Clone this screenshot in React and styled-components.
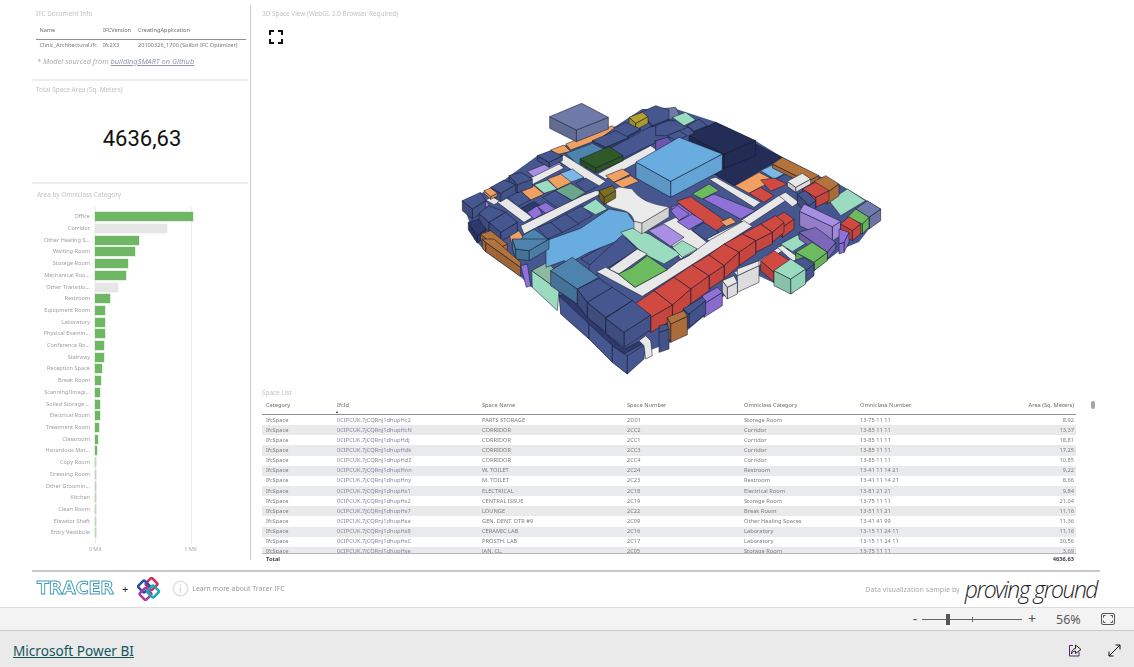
import React from 'react';
import styled, { createGlobalStyle } from 'styled-components';

const Global = createGlobalStyle`
  html, body { margin: 0; padding: 0; background: #fff; overflow: hidden; }
  body { font-family: "Noto Sans", "Open Sans", sans-serif; }
`;

const Page = styled.div`
  width: 1134px; height: 667px; display: flex; flex-direction: column; overflow: hidden;
`;
const Canvas = styled.div`
  height: 607px; box-sizing: border-box; padding: 5px 34px 0 32px; background: #fff;
  display: flex; flex-direction: column;
`;
const Main = styled.div`
  height: 555px; display: flex;
`;
const LeftCol = styled.div`
  width: 216px; display: flex; flex-direction: column;
`;
const Divider = styled.div`
  width: 1px; margin: 0 1px 0 2px; background: #cfcfcf; flex: none;
`;
const RightCol = styled.div`
  flex: 1; min-width: 0; display: flex; flex-direction: column; padding-left: 10px;
`;
const Panel = styled.section`
  height: ${p => p.$h}px; box-sizing: border-box; padding: ${p => p.$pad}; flex: none;
  border-bottom: ${p => (p.$last ? 'none' : '2px solid #eeeeee')};
  display: flex; flex-direction: column;
`;
const Title = styled.h3`
  margin: 0; font-weight: 400; font-size: 6.4px; line-height: 9px; color: #c2c2c2; white-space: nowrap;
  filter: blur(.25px);
`;
const ViewTitle = styled(Title)`
  margin-top: 4px;
`;
const InfoGrid = styled.div`
  display: grid; grid-template-columns: 63.5px 35px 1fr; margin: 8px 2px 0 0; filter: blur(.25px);
`;
const InfoHead = styled.div`
  font-size: 5.6px; line-height: 9px; color: #6f6f6f; padding: 0 0 4px 3.5px; white-space: nowrap;
  border-bottom: 1px solid #8a8f9b;
`;
const InfoCell = styled.div`
  font-size: 5.6px; line-height: 9px; color: #777; padding: 1px 0 0 3.5px; white-space: nowrap;
`;
const Note = styled.p`
  margin: 6px 0 0 1px; font-size: 7.4px; line-height: 11px; font-style: italic; color: #adadad; white-space: nowrap; filter: blur(.2px);
`;
const NoteLink = styled.span`
  color: #8f97b3; text-decoration: underline;
`;
const Kpi = styled.div`
  flex: 1; display: flex; align-items: center; justify-content: center;
  font-family: Roboto, "Noto Sans", sans-serif; font-size: 22px; font-weight: 400; letter-spacing: 0; color: #111;
  padding-top: 1px; box-sizing: border-box;
`;
const Chart = styled.div`
  position: relative; margin-top: 12px; display: flex; flex-direction: column; filter: blur(.25px);
`;
const GridLine = styled.div`
  position: absolute; top: -4px; bottom: 10px; left: ${p => p.$x}px; width: 1px; background: #ececec;
`;
const BarRow = styled.div`
  position: relative; height: 11.71px; display: grid; grid-template-columns: 53px 1fr; column-gap: 5px; align-items: center;
`;
const BarLabel = styled.div`
  font-size: 5.6px; line-height: 9px; color: #a0a0a4; text-align: right; white-space: nowrap;
`;
const Bar = styled.div`
  height: 9px; background: ${p => p.$c}; box-shadow: 0 0 0 .5px ${p => p.$edge};
`;
const Axis = styled.div`
  position: relative; height: 10px; margin-top: 5px;
`;
const AxisTick = styled.span`
  position: absolute; left: ${p => p.$x}px; transform: translateX(-50%); font-size: 5.6px; line-height: 10px; color: #a8a8a8; white-space: nowrap;
`;
const ExpandBtn = styled.div`
  width: 14px; height: 14px; margin: 9px 0 0 7px;
`;
const Stage = styled.div`
  height: 290px; margin: 53px 0 0 192px; width: 440px; flex: none;
`;
const ModelSvg = styled.svg`
  display: block;
`;
const TableTitle = styled(Title)`
  margin-top: 4px;
`;
const TableWrap = styled.div`
  position: relative; width: 814px; margin-top: 3px; filter: blur(.25px);
`;
const TableRow = styled.div`
  display: grid; grid-template-columns: 71px 145px 145px 117px 116px 100px 1fr;
  padding: 0 2px 0 4px; height: ${p => p.$h}px; align-items: center;
  background: ${p => (p.$alt ? '#e9eaec' : 'transparent')};
`;
const HeadRow = styled(TableRow)`
  border-bottom: 1px solid #8a8f9b; box-sizing: border-box; padding-bottom: 3px;
`;
const TableBody = styled.div`
  height: 138px; overflow: hidden; border-bottom: 1px solid #b4b6bc;
`;
const Cell = styled.div`
  font-size: 5.7px; line-height: 9px; color: ${p => p.$c || '#7d7d7d'}; text-align: ${p => (p.$right ? 'right' : 'left')};
  font-weight: ${p => (p.$bold ? 700 : 400)}; white-space: nowrap;
`;
const SortCaret = styled.div`
  position: absolute; left: 74px; top: 11px; width: 0; height: 0;
  border-left: 1.5px solid transparent; border-right: 1.5px solid transparent; border-bottom: 2px solid #222;
`;
const ScrollThumb = styled.div`
  position: absolute; left: 829px; top: 1px; width: 4px; height: 8px; border-radius: 2px; background: #a6a6a6;
`;
const LogoStrip = styled.div`
  margin-top: 10px; border-top: 2px solid #c9c9c9; height: 33px; display: flex; align-items: center;
  padding: 0 3px 0 5px;
`;
const TracerLogo = styled.div`
  font-family: "DejaVu Sans", sans-serif; font-weight: 700; font-size: 17px; line-height: 17px; letter-spacing: -.2px;
  width: 76px; color: #fff; -webkit-text-stroke: .9px #3f9cb8; white-space: nowrap;
  transform: scaleX(1.04); transform-origin: left center;
`;
const Plus = styled.span`
  margin-left: 9px; font-size: 11px; color: #223; line-height: 1;
`;
const BsLogo = styled.svg`
  margin-left: 9px; flex: none;
`;
const InfoIcon = styled.svg`
  margin-left: 11px; flex: none;
`;
const LearnText = styled.span`
  margin-left: 3px; font-size: 6.9px; color: #9a9a9a; white-space: nowrap; filter: blur(.2px);
`;
const SampleText = styled.span`
  margin-left: auto; font-size: 7.1px; color: #aaa; white-space: nowrap; filter: blur(.2px);
`;
const ProvingGround = styled.span`
  margin-left: 5px; font-family: "Open Sans", sans-serif; font-style: italic; font-weight: 300; font-size: 23px; line-height: 26px;
  letter-spacing: -1.5px; color: #222; white-space: nowrap;
`;
const ZoomBar = styled.div`
  height: 24px; box-sizing: border-box; background: #f3f3f3; border-top: 1px solid #dcdcdc; border-bottom: 1px solid #c8c8c8;
  display: flex; align-items: center; justify-content: flex-end; padding-right: 19px; color: #555;
`;
const ZoomSign = styled.span`
  font-size: ${p => p.$s}px; line-height: 1; color: #555; width: 8px; text-align: center;
`;
const Slider = styled.div`
  position: relative; width: 100px; height: 1px; background: #666; margin: 0 6px 0 3px;
`;
const SliderThumb = styled.div`
  position: absolute; left: 24px; top: -5px; width: 4px; height: 11px; background: #555;
`;
const SliderTick = styled.div`
  position: absolute; left: 50px; top: -2px; width: 1px; height: 5px; background: #666;
`;
const ZoomValue = styled.span`
  margin-left: 20px; font-size: 12.5px; color: #5a5a5a; width: 24px;
`;
const FitIcon = styled.svg`
  margin-left: 21px; flex: none;
`;
const Footer = styled.div`
  flex: 1; background: #eaeaea; display: flex; align-items: center; padding: 2px 13px 0;
`;
const Brand = styled.a`
  font-size: 13.6px; color: #14565c; text-decoration: underline; white-space: nowrap;
`;
const FootIcons = styled.div`
  margin-left: auto; display: flex; gap: 26px; align-items: center;
`;

const N = '#46568f', DN = '#2f3a6c', XN = '#242d55', SB = '#4e83ad', LB = '#69ace0', PB = '#7db7e6', OR = '#f0a060', BR = '#b3733c',
  MI = '#9bdcc0', RD = '#d04a42', PU = '#8f71d8', LP = '#a98fe4', GR = '#6dbb5f', W = '#e8e8e8', SL = '#6f7ba6', YE = '#b5a22e', OL = '#7d6f1e';

const layers = [
  { o: [450, 95], items: [
    [SL, 35, '302 68 398 28 478 70 382 108'],
    [N, 4, '430 140 500 110 540 130 470 160'],
    [N, 4, '465 125 500 100 530 85 575 105 520 135'],
    [N, 4, '575 55 620 35 660 48 660 75 610 95'],
    [N, 0, '480 165 590 105 660 75 660 130 600 155 520 195'],
    ['#7a2a2a', 0, '605 65 630 55 640 65 615 75'],
    [PU, 0, '620 70 645 62 660 72 635 82'],
    [YE, 20, '540 70 580 55 597 68 560 88'],
    ['#6f55b0', 0, '615 142 660 130 660 160 640 165'],
    [OR, 0, '350 150 490 95 505 115 365 168'],
    [OR, 0, '305 168 345 153 365 172 325 182'],
    [N, 15, '265 185 305 170 340 185 300 205'],
    [SB, 0, '350 178 430 148 492 180 400 225'],
    ['#2f5a28', 15, '393 195 480 158 522 185 440 222'],
    [W, 0, '445 240 605 155 630 172 470 255'],
    [LP, 0, '235 232 320 198 340 212 255 250'],
    [N, 25, '180 245 215 235 250 255 205 272'],
    [N, 25, '125 280 165 258 200 272 155 298'],
    [OR, 8, '105 290 125 282 145 298 125 308'],
    [N, 30, '40 320 95 295 110 320 70 345'],
    [W, 0, '320 195 345 183 470 262 445 280'],
    [W, 0, '110 318 330 210 345 222 135 332'],
    [PB, 0, '330 240 370 225 405 250 365 265'],
    [OR, 0, '295 255 335 240 368 265 325 285'],
    [MI, 0, '255 272 295 258 325 285 285 298'],
    [OR, 0, '215 292 255 275 285 300 245 318'],
    [N, 0, '175 308 215 290 245 318 205 338'],
    [N, 0, '380 268 410 252 450 275 410 295'],
    ['#6ba58e', 0, '318 290 365 268 410 295 370 320'],
    [N, 0, '280 310 318 290 370 320 330 345'],
    [DN, 0, '212 345 255 322 280 340 240 355'],
    [W, 0, '145 325 170 310 250 370 225 385'],
    [PU, 0, '235 355 265 335 280 360 255 375'],
    [PU, 0, '265 338 290 325 320 345 290 358'],
    [LP, 0, '70 345 110 320 120 332 90 362'],
    [N, 28, '90 358 120 335 170 355 120 385'],
    [N, 28, '120 385 170 355 205 385 155 415'],
    [DN, 22, '58 385 90 375 110 405 85 425'],
    [W, 0, '215 395 400 305 440 290 470 292 400 328 225 420'],
    [N, 0, '350 360 400 335 430 365 385 390'],
    [N, 0, '305 385 350 360 390 390 340 415'],
    [N, 0, '265 400 305 385 340 415 295 435'],
    [MI, 0, '400 340 440 315 475 345 440 362'],
    [OL, 22, '450 290 490 275 500 290 465 310'],
    [OR, 0, '470 245 520 225 545 240 495 265'],
    [OR, 0, '495 265 545 245 570 262 520 282'],
    [SB, 0, '195 440 255 405 300 438 250 470 195 470'],
    [BR, 18, '95 420 125 410 175 450 145 465'],
    [OR, 0, '180 420 210 410 222 430 190 455'],
  ] },
  { o: [660, 95], items: [
    [SL, 0, '0 45 50 40 65 70 10 80'],
    [MI, 3, '40 70 80 55 110 78 75 95'],
    [N, 3, '85 95 120 75 145 95 105 112'],
    [N, 0, '-10 80 70 80 85 100 25 125 -10 125'],
    [N, 0, '25 125 60 110 85 125 50 140'],
    ['#6f55b0', 0, '-10 140 25 130 45 150 -10 170'],
    [XN, 0, '165 240 270 150 290 150 370 190 225 275'],
    [XN, 45, '90 125 170 85 290 140 195 180'],
    [BR, 12, '340 210 370 190 480 245 445 262'],
    [BR, 35, '465 262 500 245 540 270 505 295'],
    [PB, 0, '305 230 340 213 380 238 345 255'],
    [N, 0, '350 258 380 238 415 255 385 270'],
    [OR, 0, '228 275 300 235 345 258 270 298'],
    [RD, 0, '305 258 345 252 385 270 335 292'],
    [RD, 0, '270 298 305 280 345 305 315 325'],
    [W, 0, '150 255 170 250 305 325 285 340'],
    [GR, 0, '100 300 150 270 180 290 130 315'],
    [PU, 0, '132 315 165 300 290 350 245 375'],
    [RD, 0, '52 322 95 308 205 385 170 412'],
    [PU, 0, '35 340 60 330 135 385 100 400'],
    [W, 0, '245 380 375 295 395 310 265 395'],
    [W, 0, '140 435 245 385 265 395 175 450'],
    [W, 0, '360 305 380 295 420 325 400 338'],
    [N, 30, '415 300 440 290 470 320 450 335'],
    [RD, 30, '430 285 470 265 510 290 470 310'],
    [W, 15, '385 262 430 238 455 255 410 280'],
    [MI, 0, '510 320 565 285 620 320 545 365'],
    [SL, 35, '590 345 625 320 665 345 630 370'],
    [GR, 30, '565 370 590 345 630 370 610 390'],
    [RD, 30, '545 390 570 368 605 390 580 410'],
    [LB, 48, '-69 204 60 130 190 180 35 262'],
    [LP, 43, '435 330 545 382 520 398 422 352'],
    [PU, 30, '540 405 570 415 555 445 540 450'],
  ] },
  { o: [450, 240], items: [
    [BR, 28, '100 0 135 0 215 70 215 85 110 10'],
    [SB, 30, '190 0 300 0 240 35 200 30'],
    [PU, 0, '215 80 235 75 245 140 232 145'],
    ['#8fb8a0', 0, '248 95 295 70 335 110 330 155'],
    [MI, 0, '248 95 330 155 325 215 250 145'],
    [N, 0, '395 60 500 0 575 40 450 95'],
    [N, 0, '330 170 385 205 420 250 420 300 335 225'],
    [N, 0, '420 250 490 310 490 370 420 300'],
    [N, 0, '490 320 535 350 535 405 490 370'],
    [N, 0, '535 350 590 315 585 360 535 405'],
    [DN, 0, '330 170 350 165 470 285 525 330 575 305 580 315 525 345 490 320 420 255'],
    [W, 0, '570 305 590 290 605 305 610 350 590 360 585 320'],
    [SB, 45, '305 95 370 55 450 115 385 150'],
    [N, 45, '385 150 450 118 490 145 415 190'],
    [N, 45, '415 190 490 145 550 185 470 235'],
    [N, 45, '470 238 550 185 605 228 525 280'],
  ] },
  { o: [590, 190], items: [
    [LB, 0, '-129 155 -25 118 60 60 115 70 135 100 150 130 0 190 -60 222 -75 215 -129 235'],
    [W, 0, '178 125 260 85 360 165 275 210 250 172'],
    [N, 0, '0 230 100 138 145 180 60 235 0 270'],
    [MI, 0, '95 130 130 118 180 135 275 195 225 225 175 200 148 180'],
    [MI, 0, '250 175 280 155 325 180 280 205'],
    [LP, 0, '178 125 225 105 285 145 245 172'],
    [W, 0, '22 248 50 235 88 255 138 295 235 242 270 215 300 200 360 155 465 95 490 112 160 322'],
    [W, 0, '60 240 145 180 175 195 90 255'],
    [GR, 0, '88 255 130 235 175 200 235 242 138 295'],
    [PU, 0, '245 65 265 50 300 75 270 95'],
    [PU, 0, '265 98 310 75 345 97 300 122'],
    [N, 0, '310 125 345 100 390 130 350 152'],
    [OR, 0, '395 98 425 85 442 100 412 112'],
  ] },
  { o: [660, 230], items: [
    [N, 60, '0 290 25 285 30 300 0 310'],
    [BR, 55, '25 265 75 245 85 262 35 285'],
    [N, 40, '72 240 130 205 140 215 90 255'],
    [PU, 40, '130 200 175 175 190 190 135 225'],
    [W, 35, '190 155 225 140 235 160 205 175'],
    [W, 50, '235 120 300 95 300 110 235 140'],
    [W, 0, '225 130 300 95 395 30 410 40 300 110 235 140'],
    [RD, 45, '-72 225 -15 185 40 228 -25 265'],
    [RD, 45, '-15 185 45 145 95 180 40 228'],
    [RD, 45, '45 145 100 108 150 140 95 180'],
    [RD, 40, '100 108 150 78 195 110 150 140'],
    [RD, 40, '150 78 195 45 240 70 195 110'],
    [RD, 40, '195 45 250 15 290 35 240 70'],
    [RD, 35, '250 15 305 -15 340 10 290 35'],
    [RD, 30, '305 -15 350 -40 375 -20 340 10'],
    [RD, 30, '340 -30 375 -50 405 -30 370 -5'],
    [MI, 0, '365 45 415 18 445 40 400 68'],
    [W, 0, '355 55 370 50 425 90 405 100'],
    ['#7c68b8', 20, '420 10 470 -5 530 40 505 70'],
    [GR, 25, '410 70 460 40 505 70 465 100'],
    [RD, 30, '305 95 345 65 400 100 345 130'],
    [N, 35, '405 95 435 85 465 105 435 130'],
    [MI, 45, '345 125 395 90 440 120 395 150'],
  ] },
];

const under = '463,202 485,193 505,181 538,157 617,127 643,110 677,110 717,123 757,142 783,158 820,177 840,185 882,210 873,226 860,243 843,250 826,263 805,280 793,295 773,283 760,277 738,293 723,298 710,313 690,330 672,343 647,353 628,375 613,363 590,340 562,315 560,297 532,288 522,278 487,253 475,240 470,222';

const shade = (hex, f) => {
  const v = parseInt(hex.slice(1), 16);
  const c = s => Math.round(((v >> s) & 255) * f);
  return `rgb(${c(16)},${c(8)},${c(0)})`;
};

const all = layers.flatMap(l => l.items.map(([color, h, s]) => {
  const n = s.trim().split(/\s+/).map(Number);
  const p = [];
  for (let i = 0; i < n.length; i += 2) p.push([l.o[0] + n[i] / 3, l.o[1] + n[i + 1] / 3]);
  return { color, H: h / 3, p, cy: p.reduce((a, q) => a + q[1], 0) / p.length };
}));
const flats = all.filter(b => b.H === 0);
const boxes = all.filter(b => b.H > 0).sort((a, b) => a.cy - b.cy);

function Block({ color, H, p }) {
  let a = 0;
  p.forEach((q, i) => { const r = p[(i + 1) % p.length]; a += q[0] * r[1] - r[0] * q[1]; });
  const sides = [];
  if (H > 0) p.forEach((q, i) => {
    const r = p[(i + 1) % p.length];
    const dx = r[0] - q[0];
    if (Math.sign(a) * -dx > 0) {
      const f = q[1] < r[1] ? 0.95 : 0.88;
      sides.push(<polygon key={i} fill={shade(color, f)} points={`${q[0]},${q[1]} ${r[0]},${r[1]} ${r[0]},${r[1] + H} ${q[0]},${q[1] + H}`} />);
    }
  });
  return (
    <g stroke="#141a30" strokeWidth=".55" strokeLinejoin="round">
      {sides}
      <polygon fill={color} points={p.map(q => q.join(',')).join(' ')} />
    </g>
  );
}

function Model() {
  return (
    <ModelSvg width="440" height="290" viewBox="455 95 440 290">
      <polygon points={under} fill={N} />
      {flats.map((b, i) => <Block key={`f${i}`} {...b} />)}
      <path d="M635 222 L643 224 L643 235 L635 230Z" fill="#dcdcdc" stroke="#333" strokeWidth=".5" />
      <path d="M643 224 L670 208 L670 218 L643 235Z" fill="#d2d2d2" stroke="#333" strokeWidth=".5" />
      <path d="M605 196 L620 188 L633 190 C640 200 650 205 670 208 L643 224 L635 222 C632 208 615 212 607 205Z" fill="#ebebeb" stroke="#333" strokeWidth=".5" />
      {boxes.map((b, i) => <Block key={`b${i}`} {...b} />)}
    </ModelSvg>
  );
}

const green = '#6fb764';
const bars = [
  ['Office', 98], ['Corridor', 72, 1], ['Other Healing S...', 44], ['Waiting Room', 40], ['Storage Room', 33], ['Mechanical Roo...', 31],
  ['Other Transitio...', 23, 1], ['Restroom', 15], ['Equipment Room', 10], ['Laboratory', 10], ['Physical Examin...', 10], ['Conference Ro...', 9],
  ['Stairway', 8.5], ['Reception Space', 7], ['Break Room', 5.5], ['Scanning/Imagi...', 5], ['Soiled Storage ...', 4.5], ['Electrical Room', 4.5],
  ['Treatment Room', 4], ['Classroom', 3], ['Hazardous Mat...', 2], ['Copy Room', 1.3], ['Dressing Room', 1], ['Other Groomin...', 1],
  ['Kitchen', 1], ['Clean Room', .7], ['Elevator Shaft', .7], ['Entry Vestibule', .7],
];

const idp = '0CIPCUK.7jCQRnj1dhupH';
const rows = [
  ['c2', 'PARTS STORAGE', '2D01', 'Storage Room', '13-75 11 11', '8,92'],
  ['cN', 'CORRIDOR', '2CC2', 'Corridor', '13-85 11 11', '13,37'],
  ['dj', 'CORRIDOR', '2CC1', 'Corridor', '13-85 11 11', '18,81'],
  ['dk', 'CORRIDOR', '2CC3', 'Corridor', '13-85 11 11', '17,25'],
  ['dZ', 'CORRIDOR', '2CC4', 'Corridor', '13-85 11 11', '10,85'],
  ['nn', 'W. TOILET', '2C24', 'Restroom', '13-41 11 14 21', '9,22'],
  ['ny', 'M. TOILET', '2C23', 'Restroom', '13-41 11 14 21', '8,66'],
  ['s1', 'ELECTRICAL', '2C18', 'Electrical Room', '13-81 21 21', '9,84'],
  ['s2', 'CENTRAL ISSUE', '2C19', 'Storage Room', '13-75 11 11', '21,04'],
  ['s7', 'LOUNGE', '2C22', 'Break Room', '13-51 11 21', '11,16'],
  ['sa', 'GEN. DENT. DTR #9', '2C09', 'Other Healing Spaces', '13-41 41 99', '11,36'],
  ['s8', 'CERAMIC LAB', '2C16', 'Laboratory', '13-15 11 24 11', '11,16'],
  ['sC', 'PROSTH. LAB', '2C17', 'Laboratory', '13-15 11 24 11', '30,56'],
  ['se', 'JAN. CL.', '2C05', 'Storage Room', '13-75 11 11', '3,69'],
];

export default function App() {
  return (
    <Page>
      <Global />
      <Canvas>
        <Main>
          <LeftCol>
            <Panel $h={76} $pad="4px 0 0 4px">
              <Title>IFC Document Info</Title>
              <InfoGrid>
                <InfoHead>Name</InfoHead><InfoHead>IFCVersion</InfoHead><InfoHead>CreatingApplication</InfoHead>
                <InfoCell>Clinic_Architectural.ifc</InfoCell><InfoCell>Ifc2X3</InfoCell><InfoCell>20100326_1700 (Solibri IFC Optimizer)</InfoCell>
              </InfoGrid>
              <Note>* Model sourced from <NoteLink>buildingSMART on Github</NoteLink></Note>
            </Panel>
            <Panel $h={103} $pad="4px 0 0 4px">
              <Title>Total Space Area (Sq. Meters)</Title>
              <Kpi>4636,63</Kpi>
            </Panel>
            <Panel $h={376} $pad="6px 0 0 5px" $last>
              <Title>Area by Omniclass Category</Title>
              <Chart>
                <GridLine $x={58} />
                <GridLine $x={153.5} />
                {bars.map(([label, w, grey]) => (
                  <BarRow key={label}>
                    <BarLabel>{label}</BarLabel>
                    <Bar style={{ width: w }} $c={grey ? '#e6e6e6' : w < 2 ? '#b9dcb3' : green} $edge={grey ? '#ededed' : '#c5e3c0'} />
                  </BarRow>
                ))}
                <Axis>
                  <AxisTick $x={58}>0 Mil</AxisTick>
                  <AxisTick $x={153.5}>1 Mil</AxisTick>
                </Axis>
              </Chart>
            </Panel>
          </LeftCol>
          <Divider />
          <RightCol>
            <ViewTitle>3D Space View (WebGL 2.0 Browser Required)</ViewTitle>
            <ExpandBtn>
              <svg width="14" height="14" viewBox="0 0 14 14" fill="none" stroke="#111" strokeWidth="2">
                <path d="M1 5V1H5M9 1H13V5M13 9V13H9M5 13H1V9" />
              </svg>
            </ExpandBtn>
            <Stage><Model /></Stage>
            <TableTitle>Space List</TableTitle>
            <TableWrap>
              <HeadRow $h={15}>
                <Cell $c="#6e6e6e">Category</Cell><Cell $c="#6e6e6e">IfcId</Cell><Cell $c="#6e6e6e">Space Name</Cell><Cell $c="#6e6e6e">Space Number</Cell>
                <Cell $c="#6e6e6e">Omniclass Category</Cell><Cell $c="#6e6e6e">Omniclass Number</Cell><Cell $c="#6e6e6e" $right>Area (Sq. Meters)</Cell>
              </HeadRow>
              <SortCaret />
              <ScrollThumb />
              <TableBody>
                {rows.map((r, i) => (
                  <TableRow key={r[0]} $h={10.15} $alt={i % 2 === 1}>
                    <Cell>IfcSpace</Cell>
                    <Cell $c="#8a86a0">{idp + r[0]}</Cell>
                    <Cell>{r[1]}</Cell><Cell>{r[2]}</Cell><Cell>{r[3]}</Cell><Cell>{r[4]}</Cell>
                    <Cell $right>{r[5]}</Cell>
                  </TableRow>
                ))}
              </TableBody>
              <TableRow $h={10}>
                <Cell $bold $c="#444">Total</Cell><span /><span /><span /><span /><span />
                <Cell $bold $right $c="#444">4636,63</Cell>
              </TableRow>
            </TableWrap>
          </RightCol>
        </Main>
        <LogoStrip>
          <TracerLogo>TRACER</TracerLogo>
          <Plus>+</Plus>
          <BsLogo width="24" height="24" viewBox="0 0 24 24" fill="none" strokeWidth="2.6">
            <rect x="10" y="2.5" width="9" height="9" rx="1.5" stroke="#d42a5a" transform="rotate(45 14.5 7)" />
            <rect x="2.5" y="5" width="9" height="9" rx="1.5" stroke="#2a4fa8" transform="rotate(45 7 9.5)" />
            <rect x="4" y="12.5" width="9" height="9" rx="1.5" stroke="#a83aa8" transform="rotate(45 8.5 17)" />
            <rect x="11.5" y="10" width="9" height="9" rx="1.5" stroke="#1fa6b5" transform="rotate(45 16 14.5)" />
          </BsLogo>
          <InfoIcon width="17" height="17" viewBox="0 0 17 17" fill="none">
            <circle cx="8.5" cy="8.5" r="7.3" stroke="#e2e2e2" strokeWidth="1.6" />
            <path d="M8.5 7.5V13M8.5 4V5.5" stroke="#d4d4d4" strokeWidth="1.2" />
          </InfoIcon>
          <LearnText>Learn more about Tracer IFC</LearnText>
          <SampleText>Data visualization sample by</SampleText>
          <ProvingGround>proving ground</ProvingGround>
        </LogoStrip>
      </Canvas>
      <ZoomBar>
        <ZoomSign $s={14}>-</ZoomSign>
        <Slider><SliderTick /><SliderThumb /></Slider>
        <ZoomSign $s={14}>+</ZoomSign>
        <ZoomValue>56%</ZoomValue>
        <FitIcon width="14" height="12" viewBox="0 0 14 12" fill="none" stroke="#555">
          <rect x=".5" y=".5" width="13" height="11" rx="1.5" />
          <path d="M2.5 4.5V2.5H4.5M9.5 2.5H11.5V4.5M11.5 7.5V9.5H9.5M4.5 9.5H2.5V7.5" />
        </FitIcon>
      </ZoomBar>
      <Footer>
        <Brand>Microsoft Power BI</Brand>
        <FootIcons>
          <svg width="14" height="13" viewBox="0 0 14 13" fill="none" stroke="#222" strokeWidth="1">
            <path d="M5 1.5H1.5V12H11V8" stroke="#5a2080" />
            <path d="M7.5 4.5V1L13 5.5L7.5 9.5V7C5.5 7 4 8 3.5 10C3.5 7 5 4.5 7.5 4.5Z" />
          </svg>
          <svg width="13" height="13" viewBox="0 0 13 13" fill="none" stroke="#111" strokeWidth="1">
            <path d="M12 1L1 12M7.5 1H12V5.5M1 7.5V12H5.5" />
          </svg>
        </FootIcons>
      </Footer>
    </Page>
  );
}
